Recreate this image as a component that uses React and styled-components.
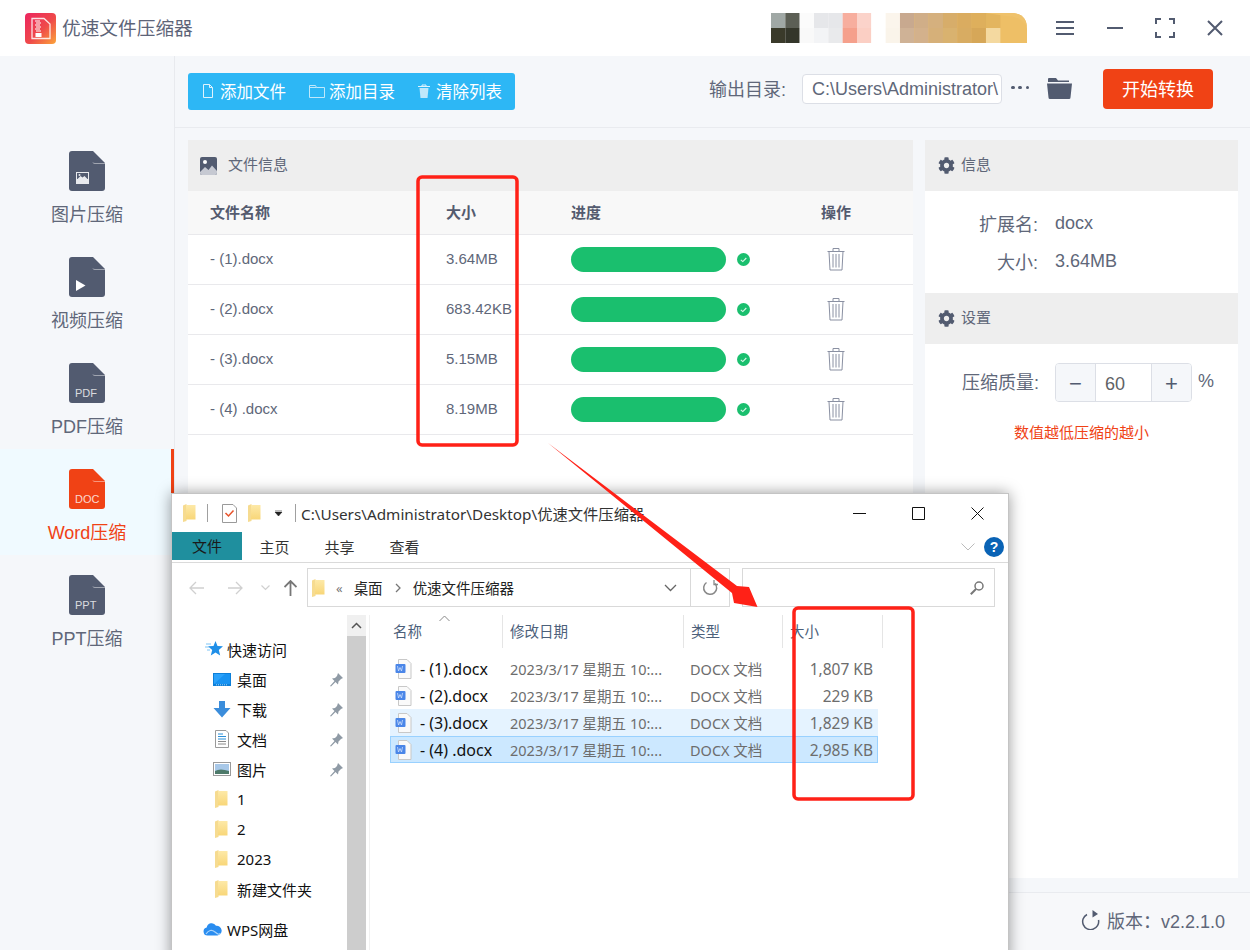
import React from 'react';
import styled, { createGlobalStyle } from 'styled-components';
import { FaCog } from 'react-icons/fa';

const Global = createGlobalStyle`
  html, body { margin: 0; padding: 0; width: 1250px; height: 950px; overflow: hidden; background: #f5f7fa; }
  * { box-sizing: border-box; }
`;
const appFont = `"Liberation Sans", "Noto Sans CJK SC", sans-serif`;
const winFont = `"Noto Sans", "Noto Sans CJK SC", sans-serif`;

const Page = styled.div`
  position: relative; width: 1250px; height: 950px; overflow: hidden;
  font-family: ${appFont}; color: #606779; background: #f5f7fa;
  display: flex; flex-direction: column;
`;
const TitleBar = styled.header`
  height: 56px; flex: none; background: #fff; display: flex; align-items: center; padding: 0 10px 0 25px;
`;
const AppTitle = styled.div`font-size: 18.7px; margin: -3px 0 0 6px; color: #5d6478;`;
const TitleRight = styled.div`margin-left: auto; display: flex; align-items: center;`;
const Mosaic = styled.svg`display: block; margin-right: 13px;`;
const WinCtl = styled.div`width: 50px; display: flex; justify-content: center; align-items: center; color: #525b70;`;

const Body = styled.div`flex: 1; display: flex; min-height: 0;`;
const Sidebar = styled.nav`
  width: 175px; flex: none; border-right: 1px solid #e8eaee; padding-top: 75px; background: #f5f7fa;
`;
const SideItem = styled.div`
  height: 106px; padding: 20px 0 0 3px; display: flex; flex-direction: column; align-items: center;
  font-size: 18px; line-height: 26px;
  color: ${p => (p.$active ? '#f04215' : '#606779')};
  background: ${p => (p.$active ? '#f0faff' : 'transparent')};
  border-right: 3px solid ${p => (p.$active ? '#f04215' : 'transparent')};
  & > svg { margin-bottom: 11px; display: block; }
`;
const Main = styled.main`flex: 1; display: flex; flex-direction: column; min-width: 0;`;
const Toolbar = styled.div`
  height: 72px; flex: none; border-bottom: 1px solid #e9ebef; display: flex; align-items: center;
  padding: 0 37px 1px 13px;
`;
const BtnGroup = styled.div`
  width: 327px; height: 37px; background: #2db7f5; border-radius: 3px; display: flex; align-items: center;
  padding-left: 15px; gap: 23px; color: #fff; font-size: 16.5px;
`;
const ToolBtn = styled.div`display: flex; align-items: center; gap: ${p => p.$gap || 6}px; & > svg { display: block; }`;
const Output = styled.div`margin-left: auto; display: flex; align-items: center;`;
const OutLabel = styled.span`font-size: 18px; margin: -7px 16px 0 -1px;`;
const PathInput = styled.div`
  width: 200px; height: 30px; background: #fff; border: 1px solid #dcdfe6; border-radius: 4px; font-size: 18px;
  line-height: 29px; padding: 0 3px 0 9px; overflow: hidden; white-space: nowrap; margin-top: -5px;
`;
const Dots = styled.span`
  width: 18px; margin: -7px 0 0 9px; display: flex; justify-content: space-between;
  & > i { width: 3.5px; height: 3.5px; border-radius: 50%; background: #525b70; }
`;
const FolderBtn = styled.svg`margin: -5px 31px 0 18px; display: block;`;
const StartBtn = styled.div`
  width: 110px; height: 40px; background: #f04215; border-radius: 4px; color: #fff; font-size: 18px;
  display: flex; align-items: center; justify-content: center; margin-top: -5px; padding-bottom: 1px;
`;

const Panels = styled.div`
  flex: 1; min-height: 0; display: grid; grid-template-columns: 725px 313px; gap: 12px; padding: 12px 12px 14px 13px;
`;
const Panel = styled.section`background: #fff; display: flex; flex-direction: column;`;
const PanelHead = styled.div`
  height: 51px; flex: none; background: #eeeeee; display: flex; align-items: center; padding: 0 0 5px ${p => p.$pl || 13}px;
  font-size: 15px; gap: ${p => p.$gap || 5}px; color: #606779;
  & > svg { color: #525b70; display: block; margin-top: 5px; }
`;
const Grid = styled.div`
  display: grid; grid-template-columns: 236px 125px 250px 1fr; align-items: center; padding-left: 22px;
  font-size: 15px; border-bottom: 1px solid #e9e9ec;
`;
const THead = styled(Grid)`height: 44px; padding-bottom: 3px; background: #f8f8f8; font-weight: 700; color: #545b6f;`;
const TRow = styled(Grid)`height: 50px; & > span { margin-top: -2px; }`;
const ProgressCell = styled.div`display: flex; align-items: center; gap: 11px;`;
const Bar = styled.div`width: 155px; height: 25px; border-radius: 13px; background: #1abf6e;`;
const TrashCell = styled.div`padding-left: 6px; line-height: 0; margin-top: -2px;`;
const InfoLine = styled.div`display: flex; align-items: center; font-size: 18px; height: 38px;`;
const InfoKey = styled.span`width: 113px; text-align: right; margin-right: 17px;`;
const InfoBody = styled.div`padding: 13px 0; height: 102px; flex: none;`;
const SetBody = styled.div`padding-top: 19px;`;
const QualityRow = styled.div`display: flex; align-items: center; padding-left: 37px; font-size: 18px;`;
const QualityLabel = styled.span`margin-top: -4px;`;
const Stepper = styled.div`
  margin-left: 16px; width: 137px; height: 39px; border: 1px solid #dcdfe6; border-radius: 4px; display: grid;
  grid-template-columns: 40px 1fr 40px; overflow: hidden; background: #fff;
`;
const StepBtn = styled.div`
  background: #f5f7fa; display: flex; align-items: center; justify-content: center; font-size: 22px; color: #525b70;
  ${p => (p.$right ? 'border-left: 1px solid #dcdfe6;' : 'border-right: 1px solid #dcdfe6;')}
`;
const StepVal = styled.div`padding: 1px 0 0 9px; line-height: 39px; font-size: 18px; color: #606266;`;
const Pct = styled.span`margin: -2px 0 0 6px; font-size: 18px;`;
const Hint = styled.div`margin: 19px 0 0 89px; color: #f04215; font-size: 15px; line-height: 24px;`;
const Footer = styled.footer`
  height: 58px; flex: none; border-top: 1px solid #e9ebef; background: #f7f8fa; display: flex; align-items: center;
  justify-content: flex-end; padding: 0 25px 4px 0; font-size: 18px; gap: 7px;
`;

/* Explorer */
const Explorer = styled.div`
  position: absolute; left: 171px; top: 493px; width: 838px; height: 470px; background: #fff;
  border: 1px solid #c4c4c4; box-shadow: 0 0 14px rgba(0,0,0,.4); font-family: ${winFont}; color: #1a1a1a;
  font-size: 15px; display: flex; flex-direction: column;
`;
const ExTitle = styled.div`height: 38px; flex: none; display: flex; align-items: center; padding-left: 11px; position: relative;`;
const ExSep = styled.span`width: 1px; height: 18px; background: #a0a0a0; margin: 0 ${p => p.$r || 14}px 0 ${p => p.$l || 11}px;`;
const ExPath = styled.span`color: #333; white-space: nowrap; font-size: 15.3px;`;
const ExCtl = styled.div`margin-left: auto; display: flex; align-items: center; padding-right: 24px; gap: 46px;`;
const Ribbon = styled.div`
  height: 31px; flex: none; display: flex; border-bottom: 1px solid #dadada; position: relative; font-size: 15px;
`;
const FileTab = styled.div`width: 70px; height: 28px; background: #1f8f9e; text-align: center; line-height: 28px;`;
const Tab = styled.div`width: 65px; text-align: center; line-height: 30px; color: #333;`;
const RibbonRight = styled.div`margin-left: auto; display: flex; align-items: center; gap: 9px; padding: 0 4px 0 0;`;
const AddrRow = styled.div`height: 52px; flex: none; padding: 5px 13px 8px 0; display: flex; align-items: stretch;`;
const NavArrows = styled.div`
  width: 135px; flex: none; display: flex; align-items: center; padding-left: 17px;
  & > svg:nth-child(2) { margin-left: 22px; }
  & > svg:nth-child(3) { margin-left: 18px; }
  & > svg:nth-child(4) { margin-left: 14px; }
`;
const AddrBox = styled.div`
  width: 423px; flex: none; border: 1px solid #d9d9d9; display: flex; align-items: center; padding-left: 4px; font-size: 14.5px; color: #222;
`;
const Crumb = styled.span`margin-left: ${p => p.$ml || 0}px; color: ${p => p.$c || 'inherit'}; font-size: ${p => p.$fs || 14.5}px;`;
const CrumbArrow = styled.span`margin: 0 12px; line-height: 0;`;
const AddrSeg = styled.div`
  margin-left: ${p => p.$auto ? 'auto' : '0'}; width: ${p => p.$w}px; height: 100%; display: flex; align-items: center; justify-content: center;
  border-left: ${p => p.$line ? '1px solid #d9d9d9' : 'none'};
`;
const SearchBox = styled.div`
  margin-left: 12px; flex: 1; border: 1px solid #d9d9d9; display: flex; align-items: center; justify-content: flex-end; padding-right: 10px;
`;
const ExBody = styled.div`flex: 1; display: flex; min-height: 0;`;
const NavPane = styled.div`width: 175px; flex: none; padding-top: 19px;`;
const NavRow = styled.div`
  height: 30px; display: flex; align-items: center; position: relative; padding-left: ${p => p.$pl}px;
  margin-top: ${p => p.$mt || 0}px; font-size: 15px; color: #111;
  & > svg:first-child { flex: none; margin-right: ${p => p.$gap}px; display: block; }
`;
const Pin = styled.svg`position: absolute; left: 158px; top: 9px;`;
const ScrollBar = styled.div`width: 19px; flex: none; background: #cdcdcd;`;
const ScrollUp = styled.div`height: 21px; background: #f0f0f0; display: flex; align-items: center; justify-content: center;`;
const FilePane = styled.div`flex: 1; margin-left: 3px; border-left: 1px solid #f0f0f0; padding-left: 20px;`;
const HeadRow = styled.div`display: grid; grid-template-columns: 113px 181px 99px 100px; height: 33px; position: relative;`;
const HeadCell = styled.div`
  padding-left: ${p => p.$pl || 7}px; border-right: 1px solid #e5e5e5; line-height: 33px; font-size: 14.5px; color: #4c607a;
`;
const Caret = styled.svg`position: absolute; left: 49px; top: 0;`;
const FileList = styled.div`margin-top: 7px; width: 488px;`;
const FileRow = styled.div`
  display: grid; grid-template-columns: 120px 180px 100px 83px; padding-right: 5px; height: 27px; align-items: center;
  background: ${p => p.$sel === 2 ? '#cce8ff' : p.$sel === 1 ? '#e5f3ff' : 'transparent'};
  box-shadow: ${p => p.$sel === 2 ? 'inset 0 0 0 1px #99d1ff' : 'none'}; font-size: 14.5px; white-space: nowrap; color: #6d6d6d;
`;
const FileName = styled.div`display: flex; align-items: center; color: #111; padding-left: 5px; gap: 8px; font-size: 16px;`;
const SizeCell = styled.div`text-align: right; font-size: 15.5px;`;

const Annot = styled.svg`position: absolute; left: 0; top: 0; pointer-events: none;`;

const Doc = ({ color = '#525b70', label, kind }) => (
  <svg width="36" height="40" viewBox="0 0 36 40">
    <path d="M3 0H24L36 12V37a3 3 0 0 1-3 3H3a3 3 0 0 1-3-3V3a3 3 0 0 1 3-3Z" fill={color} />
    <path d="M24 11.5Q24 12.500 26 12.500H36" fill="none" stroke="#fff" strokeOpacity=".45" strokeWidth="1" />
    {kind === 'image' && (
      <g>
        <rect x="7" y="21" width="13" height="12" fill="#e8eaee" />
        <rect x="8" y="22" width="11" height="6" fill="#525b70" />
        <path d="M8.500 28l3-3 2 1.500 2-1.500 3 3Z" fill="#e8eaee" />
        <circle cx="10.500" cy="24" r="1" fill="#e8eaee" />
      </g>
    )}
    {kind === 'video' && <path d="M7 23l9.500 5.500L7 34Z" fill="#fff" />}
    {label && <text x="6" y="34" fontFamily="Liberation Sans, sans-serif" fontSize="11" fill="#fff" fillOpacity=".8">{label}</text>}
  </svg>
);

const Logo = () => (
  <svg width="31" height="31" viewBox="0 0 31 31">
    <defs>
      <linearGradient id="lg" x1="0" y1="0" x2="1" y2="1">
        <stop offset="0" stopColor="#ec2560" />
        <stop offset=".55" stopColor="#ef4a4a" />
        <stop offset="1" stopColor="#fba53a" />
      </linearGradient>
    </defs>
    <rect width="31" height="31" rx="4" fill="url(#lg)" />
    <path d="M7 5.500H19L25 11V25.500H7Z" fill="none" stroke="#fff" strokeOpacity=".85" strokeWidth="1.300" />
    <path d="M10 8h5M11 10h5M10 12h5M11 14h5M10 16h5M11 18h5" stroke="#fff" strokeWidth="1.200" />
    <rect x="10.500" y="20" width="6" height="4" fill="#fff" />
  </svg>
);

const ImageGlyph = () => (
  <svg width="17" height="18" viewBox="0 0 17 18">
    <rect width="17" height="18" rx="2" fill="#525b70" />
    <circle cx="5" cy="5" r="2" fill="#fff" />
    <path d="M0 15l5-5 3.500 3L12 8.500 17 14v2a2 2 0 0 1-2 2H2a2 2 0 0 1-2-2Z" fill="#c6c9d2" />
  </svg>
);

const top = ['#a0a8a5','#5c5f55','#fbfbfb','#e6e7ea','#e6e7ea','#f7ae9e','#fbd3ca','#ffffff','#fbf5ec','#c8a98f','#d0ae88','#d5b07e','#d5ac6a','#d8ab60','#dcae5c','#e2b45f'];
const bot = ['#3a3a2a','#34362a','#f9f9f9','#f3f4f6','#e9eaec','#f5a08c','#fbcfc4','#ffffff','#faf4ea','#cfb296','#d3b18c','#d6b079','#d9b26f','#d8ac62','#d6a758','#f4d9a0'];
const MosaicArt = () => (
  <Mosaic width="256" height="30" viewBox="0 0 256 30">
    <path d="M130 0H240Q256 0 256 16V30H130Z" fill="#eebf66" />
    {top.map((c, i) => <rect key={'t' + i} x={i * 14.33} y="0" width="14.4" height="15.100" fill={c} opacity={i > 11 ? .95 : 1} />)}
    {bot.map((c, i) => <rect key={'b' + i} x={i * 14.33} y="15" width="14.4" height="15" fill={c} />)}
    <path d="M215 0H240Q256 0 256 16V14Q250 3 235 3Z" fill="#efc26c" />
  </Mosaic>
);

const Trash = () => (
  <svg width="18" height="24" viewBox="0 0 18 24" fill="none" stroke="#8a90a2" strokeWidth="1">
    <path d="M.5 4.500H17.500M6 4.500V1.500H12V4.500M2 4.500L3 23H15L16 4.500" />
    <path d="M6 7V20.500M9 7V20.500M12 7V20.500" />
  </svg>
);
const Check = () => (
  <svg width="13" height="13" viewBox="0 0 13 13">
    <circle cx="6.500" cy="6.500" r="6.500" fill="#1abf6e" />
    <path d="M3.800 6.800l2 1.800 3.500-3.600" fill="none" stroke="#fff" strokeOpacity=".85" strokeWidth="1.100" />
  </svg>
);
const Folder = ({ w = 13, h = 18 }) => (
  <svg width={w} height={h} viewBox="0 0 13 18">
    <defs>
      <linearGradient id="fg" x1="0" y1="0" x2="0" y2="1">
        <stop offset="0" stopColor="#fde9a8" />
        <stop offset="1" stopColor="#f8d678" />
      </linearGradient>
    </defs>
    <path d="M0 1.500L3.500 0V17L0 18Z" fill="#f6db90" />
    <path d="M3 1H12.500V15.500H3Z" fill="url(#fg)" />
  </svg>
);
const WordFile = () => (
  <svg width="17" height="20" viewBox="0 0 17 20">
    <path d="M3.500.5H12L16 4.500V19.500H3.500Z" fill="#fafafa" stroke="#c8c8c8" />
    <rect x="0.500" y="5" width="10" height="9" rx="1" fill="#4a86e8" />
    <path d="M2.500 7l1 5 1.500-3.500L6.500 12l1-5" fill="none" stroke="#cfe0fb" strokeWidth=".8" />
  </svg>
);
const PinIcon = () => (
  <Pin width="13" height="14" viewBox="0 0 13 14">
    <path d="M8 0l5 5-2 1-2.500 2.500L8 11.500 5.500 9 1 13.500 0 13l4.500-5L2 5.500 5 5l2-2Z" fill="#8f9aa5" />
  </Pin>
);
const Star = () => (
  <svg width="18" height="16" viewBox="0 0 18 16">
    <path d="M10.500 0l2 5 5.500.3-4.200 3.600 1.400 5.600-4.700-3-4.700 3 1.400-5.600L3 5.300l5.500-.3Z" fill="#1f8fe8" />
    <path d="M1 3h5M0 6h4M2 9h3" stroke="#7cc4f5" strokeWidth="1" />
  </svg>
);
const Desktop = () => (
  <svg width="18" height="13" viewBox="0 0 18 13">
    <rect width="18" height="13" fill="#0d7fd8" />
    <path d="M1 1H17V11H1Z" fill="#2ba2fb" />
    <path d="M1 11L12 1H17V11Z" fill="#1893f2" />
    <path d="M3 11.800H15" stroke="#cde8fb" strokeWidth=".8" strokeDasharray="1 1" />
  </svg>
);
const Down = () => (
  <svg width="18" height="17" viewBox="0 0 18 17">
    <path d="M6 0H12V7H17.500L9 16.500.5 7H6Z" fill="#3b8ddb" />
  </svg>
);
const DocsIcon = () => (
  <svg width="18" height="18" viewBox="0 0 18 18">
    <path d="M2.500.5H13L15.500 3V17.500H2.500Z" fill="#fff" stroke="#9a9a9a" />
    <path d="M5 4h5M5 6.500h8M5 9h8" stroke="#2b8fd8" strokeWidth="1" />
    <path d="M5 11.500h8M5 14h8" stroke="#8a8a8a" strokeWidth="1" />
  </svg>
);
const PicIcon = () => (
  <svg width="18" height="14" viewBox="0 0 18 14">
    <rect x=".5" y=".5" width="17" height="13" fill="#fff" stroke="#9a9a9a" />
    <rect x="2" y="2" width="14" height="10" fill="#a8c8e8" />
    <path d="M2 9q5-3 14 0v3H2Z" fill="#4d7a6a" />
  </svg>
);
const Cloud = () => (
  <svg width="19" height="14" viewBox="0 0 19 14">
    <path d="M4.500 13.500a4 4 0 0 1-.8-7.900A5 5 0 0 1 13 3.800a4.800 4.800 0 0 1 1.500 9.700Z" fill="#2a8df0" />
    <path d="M3 12q4-6 9-2t5 1" fill="none" stroke="#a9d4fb" strokeWidth="1.200" />
  </svg>
);
const Gray = ({ d, w = 14, h = 14, stroke = '#d0d0d0', sw = 1.5 }) => (
  <svg width={w} height={h} viewBox={`0 0 ${w} ${h}`} fill="none" stroke={stroke} strokeWidth={sw}><path d={d} /></svg>
);

const sideItems = [
  { t: '图片压缩', kind: 'image' },
  { t: '视频压缩', kind: 'video' },
  { t: 'PDF压缩', label: 'PDF' },
  { t: 'Word压缩', label: 'DOC', active: true },
  { t: 'PPT压缩', label: 'PPT' },
];
const rows = [
  ['- (1).docx', '3.64MB'],
  ['- (2).docx', '683.42KB'],
  ['- (3).docx', '5.15MB'],
  ['- (4) .docx', '8.19MB'],
];
const winRows = [
  ['- (1).docx', '1,807 KB', 0],
  ['- (2).docx', '229 KB', 0],
  ['- (3).docx', '1,829 KB', 1],
  ['- (4) .docx', '2,985 KB', 2],
];
const quick = [
  ['桌面', <Desktop />], ['下载', <Down />], ['文档', <DocsIcon />], ['图片', <PicIcon />],
];
const folders = ['1', '2', '2023', '新建文件夹'];
const versionText = '版本\uFF1Av2.2.1.0';

export default function App() {
  return (
    <Page>
      <Global />
      <TitleBar>
        <Logo />
        <AppTitle>优速文件压缩器</AppTitle>
        <TitleRight>
          <MosaicArt />
          <WinCtl>
            <svg width="20" height="16" viewBox="0 0 20 16" fill="none" stroke="#525b70" strokeWidth="2"><path d="M1 2H19M1 8H19M1 14H19" /></svg>
          </WinCtl>
          <WinCtl>
            <svg width="18" height="4" viewBox="0 0 18 4" fill="none" stroke="#525b70" strokeWidth="2"><path d="M1 2H17" /></svg>
          </WinCtl>
          <WinCtl>
            <svg width="20" height="20" viewBox="0 0 20 20" fill="none" stroke="#525b70" strokeWidth="2"><path d="M1 6V1H6M14 1H19V6M19 14V19H14M6 19H1V14" /></svg>
          </WinCtl>
          <WinCtl>
            <svg width="16" height="16" viewBox="0 0 16 16" fill="none" stroke="#525b70" strokeWidth="2"><path d="M1 1L15 15M15 1L1 15" /></svg>
          </WinCtl>
        </TitleRight>
      </TitleBar>
      <Body>
        <Sidebar>
          {sideItems.map(s => (
            <SideItem key={s.t} $active={s.active}>
              <Doc color={s.active ? '#f04215' : '#525b70'} label={s.label} kind={s.kind} />
              {s.t}
            </SideItem>
          ))}
        </Sidebar>
        <Main>
          <Toolbar>
            <BtnGroup>
              <ToolBtn $gap={7}>
                <svg width="10" height="14" viewBox="0 0 10 14" fill="none" stroke="#dff3fd" strokeWidth="1"><path d="M.5.5H6.500L9.500 3.500V13.500H.5ZM6.500.5V3.500H9.500" /></svg>
                添加文件
              </ToolBtn>
              <ToolBtn $gap={4}>
                <svg width="16" height="14" viewBox="0 0 16 14" fill="none" stroke="#bfe8fb" strokeWidth="1"><path d="M.5 1.500H6.500L7.500 3.500H15.500V13.500H.5ZM.5 3.500H7.500" /></svg>
                添加目录
              </ToolBtn>
              <ToolBtn $gap={6}>
                <svg width="12" height="14" viewBox="0 0 12 14"><path d="M0 2.500H12M4 2.500V1H8V2.500" fill="none" stroke="#dff3fd" /><path d="M1.500 4H10.500L9.500 14H2.500Z" fill="#bfe8fb" /></svg>
                清除列表
              </ToolBtn>
            </BtnGroup>
            <Output>
              <OutLabel>输出目录:</OutLabel>
              <PathInput>C:\Users\Administrator\</PathInput>
              <Dots><i /><i /><i /></Dots>
              <FolderBtn width="25" height="21" viewBox="0 0 25 21">
                <path d="M1.500 0H9L11 2.500H22V4H1V1Z" fill="#525b70" />
                <path d="M0 5.500H25L23.500 19.500a1.500 1.500 0 0 1-1.500 1.500H3a1.500 1.500 0 0 1-1.500-1.500Z" fill="#525b70" />
              </FolderBtn>
              <StartBtn>开始转换</StartBtn>
            </Output>
          </Toolbar>
          <Panels>
            <Panel>
              <PanelHead $gap={11} $pl={12}><ImageGlyph />文件信息</PanelHead>
              <THead><span>文件名称</span><span>大小</span><span>进度</span><span>操作</span></THead>
              {rows.map(r => (
                <TRow key={r[0]}>
                  <span>{r[0]}</span>
                  <span>{r[1]}</span>
                  <ProgressCell><Bar /><Check /></ProgressCell>
                  <TrashCell><Trash /></TrashCell>
                </TRow>
              ))}
            </Panel>
            <Panel>
              <PanelHead $gap={6}><FaCog size={17} />信息</PanelHead>
              <InfoBody>
                <InfoLine><InfoKey>扩展名:</InfoKey>docx</InfoLine>
                <InfoLine><InfoKey>大小:</InfoKey>3.64MB</InfoLine>
              </InfoBody>
              <PanelHead $gap={6}><FaCog size={17} />设置</PanelHead>
              <SetBody>
                <QualityRow>
                  <QualityLabel>压缩质量:</QualityLabel>
                  <Stepper>
                    <StepBtn>−</StepBtn>
                    <StepVal>60</StepVal>
                    <StepBtn $right>+</StepBtn>
                  </Stepper>
                  <Pct>%</Pct>
                </QualityRow>
                <Hint>数值越低压缩的越小</Hint>
              </SetBody>
            </Panel>
          </Panels>
          <Footer>
            <svg width="19" height="20" viewBox="0 0 19 20" fill="none" stroke="#525b70" strokeWidth="1.500">
              <path d="M6 4.500A8 8 0 1 0 17.500 10" />
              <path d="M11.500 0L17 4 11.500 7.500Z" fill="#525b70" stroke="none" />
            </svg>
            <span>{versionText}</span>
          </Footer>
        </Main>
      </Body>

      <Explorer>
        <ExTitle>
          <Folder />
          <ExSep />
          <svg width="15" height="19" viewBox="0 0 15 19" style={{ marginRight: 11 }}>
            <path d="M.5.5H11L14.500 4V18.500H.5Z" fill="#fff" stroke="#9a9a9a" />
            <path d="M3.500 9l3 3 5-5.500" fill="none" stroke="#e8532b" strokeWidth="1.500" />
          </svg>
          <Folder />
          <svg width="9" height="6" viewBox="0 0 9 6" style={{ marginLeft: 13 }}><path d="M1 0H8M1 2H8L4.500 6Z" fill="#222" stroke="#222" strokeWidth=".6" /></svg>
          <ExSep $l={12} $r={5} />
          <ExPath>C:\Users\Administrator\Desktop\优速文件压缩器</ExPath>
          <ExCtl>
            <Gray w={13} h={13} d="M0 6.500H13" stroke="#111" sw={1} />
            <Gray w={13} h={13} d="M.5.5H12.500V12.500H.5Z" stroke="#111" sw={1} />
            <Gray w={13} h={13} d="M.5.5L12.500 12.500M12.500.5L.5 12.500" stroke="#111" sw={1} />
          </ExCtl>
        </ExTitle>
        <Ribbon>
          <FileTab>文件</FileTab>
          <Tab>主页</Tab>
          <Tab>共享</Tab>
          <Tab>查看</Tab>
          <RibbonRight>
            <Gray w={14} h={8} d="M.5.5L7 7 13.500.5" stroke="#bbb" sw={1} />
            <svg width="20" height="20" viewBox="0 0 20 20">
              <circle cx="10" cy="10" r="10" fill="#0a63b5" />
              <text x="10" y="15" textAnchor="middle" fontFamily="Liberation Sans, sans-serif" fontWeight="700" fontSize="14" fill="#fff">?</text>
            </svg>
          </RibbonRight>
        </Ribbon>
        <AddrRow>
          <NavArrows>
            <Gray w={16} h={14} d="M15 7H1M7 1L1 7l6 6" sw={1.300} />
            <Gray w={16} h={14} d="M1 7H15M9 1l6 6-6 6" sw={1.300} />
            <Gray w={9} h={6} d="M.5.5L4.500 4.500 8.500.5" sw={1.200} />
            <Gray w={13} h={16} d="M6.500 16V1M.5 7l6-6 6 6" stroke="#777" sw={1.800} />
          </NavArrows>
          <AddrBox>
            <Folder />
            <Crumb $ml={11} $c="#777" $fs={13}>«</Crumb>
            <Crumb $ml={11}>桌面</Crumb>
            <CrumbArrow><Gray w={6} h={10} d="M1 1l4 4-4 4" stroke="#777" sw={1.300} /></CrumbArrow>
            <Crumb>优速文件压缩器</Crumb>
            <AddrSeg $auto $w={39}><Gray w={13} h={8} d="M1 1l5.500 5.500L12 1" stroke="#666" sw={1.300} /></AddrSeg>
            <AddrSeg $w={39} $line>
              <svg width="16" height="16" viewBox="0 0 16 16" fill="none" stroke="#888" strokeWidth="1.500">
                <path d="M4.500 2.500A6.500 6.500 0 1 0 13 3.500" />
                <path d="M12 0V4.500H16" strokeWidth="1.300" />
              </svg>
            </AddrSeg>
          </AddrBox>
          <SearchBox>
            <svg width="14" height="14" viewBox="0 0 14 14" fill="none" stroke="#777" strokeWidth="1.500">
              <circle cx="9" cy="5" r="4" />
              <path d="M6 8L.8 13.200" strokeWidth="2" />
            </svg>
          </SearchBox>
        </AddrRow>
        <ExBody>
          <NavPane>
            <NavRow $pl={33} $gap={4}><Star />快速访问</NavRow>
            {quick.map(q => (
              <NavRow key={q[0]} $pl={41} $gap={6}>{q[1]}{q[0]}<PinIcon /></NavRow>
            ))}
            {folders.map(f => (
              <NavRow key={f} $pl={43} $gap={9}><Folder />{f}</NavRow>
            ))}
            <NavRow $pl={31} $gap={5} $mt={10}><Cloud />WPS网盘</NavRow>
          </NavPane>
          <ScrollBar>
            <ScrollUp><Gray w={11} h={7} d="M1 6l4.500-4.500L10 6" stroke="#555" sw={1.500} /></ScrollUp>
          </ScrollBar>
          <FilePane>
            <HeadRow>
              <HeadCell $pl={3}>名称</HeadCell>
              <HeadCell>修改日期</HeadCell>
              <HeadCell>类型</HeadCell>
              <HeadCell>大小</HeadCell>
              <Caret width="11" height="7" viewBox="0 0 11 7" fill="none" stroke="#888"><path d="M.5 6L5.500 1 10.500 6" /></Caret>
            </HeadRow>
            <FileList>
              {winRows.map(r => (
                <FileRow key={r[0]} $sel={r[2]}>
                  <FileName><WordFile />{r[0]}</FileName>
                  <div>2023/3/17 星期五 10:...</div>
                  <div>DOCX 文档</div>
                  <SizeCell>{r[1]}</SizeCell>
                </FileRow>
              ))}
            </FileList>
          </FilePane>
        </ExBody>
      </Explorer>

      <Annot width="1250" height="950" viewBox="0 0 1250 950">
        <rect x="418" y="177" width="99" height="268" rx="4" fill="none" stroke="#ff2117" strokeWidth="3.500" />
        <rect x="794" y="608" width="119" height="191" rx="4" fill="none" stroke="#ff2117" strokeWidth="3.500" />
        <polygon points="548,443 737,586 749,587 757.500,607 734,603 732,593" fill="#ff2117" />
      </Annot>
    </Page>
  );
}
